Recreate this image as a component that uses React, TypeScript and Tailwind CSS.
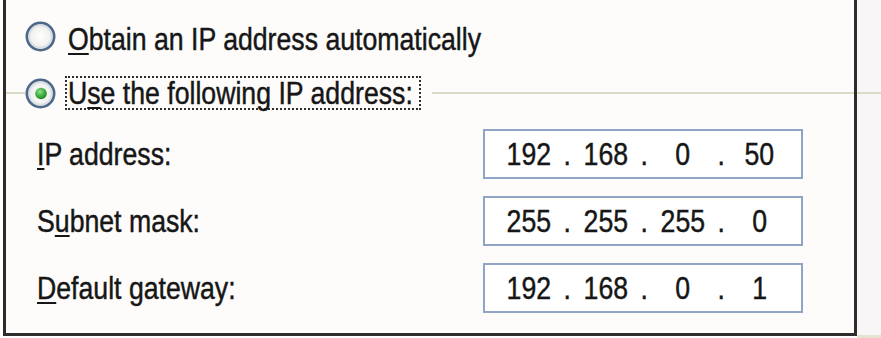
import React from "react";

function Radio({ checked, id }: { checked?: boolean; id: string }) {
  return (
    <svg width="31" height="31" viewBox="0 0 31 31" className="shrink-0">
      <defs>
        <radialGradient id={`rg-${id}`} cx="50%" cy="50%" r="50%">
          <stop offset="0" stopColor="#ffffff" />
          <stop offset="0.7" stopColor="#f1f1ee" />
          <stop offset="1" stopColor="#c4c9d0" />
        </radialGradient>
        <radialGradient id={`gg-${id}`} cx="40%" cy="35%" r="65%">
          <stop offset="0" stopColor="#8fe08f" />
          <stop offset="0.6" stopColor="#3fae3f" />
          <stop offset="1" stopColor="#23862a" />
        </radialGradient>
      </defs>
      <circle cx="15.5" cy="15.5" r="13.7" fill={`url(#rg-${id})`} stroke="#4f6889" strokeWidth="2.6" />
      <circle cx="15.5" cy="15.5" r="11.3" fill="none" stroke="#d9dfe7" strokeWidth="1.4" />
      {checked && <circle cx="16" cy="15.5" r="5.8" fill={`url(#gg-${id})`} />}
    </svg>
  );
}

function IpBox({ parts }: { parts: string[] }) {
  return (
    <div className="w-[320px] h-[50px] border-2 border-[#8fa5c3] bg-white flex items-center pl-[5px] shrink-0">
      {parts.map((p, i) => (
        <React.Fragment key={i}>
          {i > 0 && (
            <span className="w-0 flex justify-center">
              <span className="inline-block scale-x-[0.86] origin-center">.</span>
            </span>
          )}
          <span className="w-[77px] text-center">
            <span className="inline-block scale-x-[0.86] origin-center">{p}</span>
          </span>
        </React.Fragment>
      ))}
    </div>
  );
}

function Row({ label, k, rest, parts }: { label?: string; k: string; rest: string; parts: string[] }) {
  return (
    <div className="flex items-center h-[50px]">
      <div className="flex-1 pl-[31px]">
        <span className="inline-block whitespace-nowrap scale-x-[0.86] origin-left">
          {label}
          <span className="underline decoration-2 underline-offset-[3px]">{k}</span>
          {rest}
        </span>
      </div>
      <div className="mr-[51px]">
        <IpBox parts={parts} />
      </div>
    </div>
  );
}

export default function App() {
  return (
    <div className="w-[881px] h-[338px] overflow-hidden bg-[#fdfcfc] flex font-['Liberation_Sans',Arial,sans-serif] text-[31px] leading-none text-[#161616] [-webkit-text-stroke:0.45px_#161616]">
      <div className="w-[3px] shrink-0 bg-white" />
      <div className="w-[854px] h-[336px] shrink-0 border-l-[3px] border-r-[3px] border-b-[3px] border-[#2d2d2d] bg-[#fdfcfb] flex flex-col">
        {/* Row 1: obtain automatically */}
        <div className="flex items-start mt-[21px] pl-[19px] h-[31px]">
          <Radio id="a" />
          <div className="ml-[12px] mt-[3px]">
            <span className="inline-block whitespace-nowrap scale-x-[0.86] origin-left">
              <span className="underline decoration-2 underline-offset-[3px]">O</span>btain an IP address automatically
            </span>
          </div>
        </div>
        {/* Row 2: use following */}
        <div className="flex items-center mt-[24px] h-[34px]">
          <div className="w-[19px] h-[2px] bg-[#dcdac9] shrink-0" />
          <Radio id="b" checked />
          <div className="ml-[9px] w-[356px] h-[34px] border-2 border-dotted border-[#2f2f2f] flex items-center pl-[1px] shrink-0">
            <span className="inline-block whitespace-nowrap scale-x-[0.86] origin-left">
              U<span className="underline decoration-2 underline-offset-[3px]">s</span>e the following IP address:
            </span>
          </div>
          <div className="ml-[11px] flex-1 h-[2px] bg-[#dcdac9]" />
        </div>
        {/* Fields */}
        <div className="flex flex-col gap-[17px] mt-[19px]">
          <Row label="" k="I" rest="P address:" parts={["192", "168", "0", "50"]} />
          <Row label="S" k="u" rest="bnet mask:" parts={["255", "255", "255", "0"]} />
          <Row label="" k="D" rest="efault gateway:" parts={["192", "168", "0", "1"]} />
        </div>
      </div>
      <div className="flex-1 bg-[#f8f6f6] flex flex-col">
        <div className="mt-[92px] h-[2px] bg-[#dcdac9]" />
        <div className="mt-[241px] h-[3px] bg-[#e6e3d3]" />
      </div>
    </div>
  );
}
